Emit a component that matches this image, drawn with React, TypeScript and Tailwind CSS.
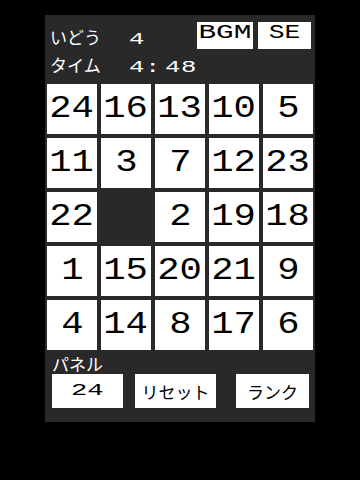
import React from "react";

const tiles = [24, 16, 13, 10, 5, 11, 3, 7, 12, 23, 22, 0, 2, 19, 18, 1, 15, 20, 21, 9, 4, 14, 8, 17, 6];

const mono = "font-['Liberation_Mono','DejaVu_Sans_Mono',monospace]";
const jp = "font-['Noto_Sans_CJK_JP','Noto_Sans',sans-serif]";

function Ch({ c }: { c: string }) {
  return (
    <span className="inline-flex w-[16px] justify-center">
      <span className={`inline-block ${mono} text-[16px] leading-[17px] scale-x-[1.6]`}>{c}</span>
    </span>
  );
}

export default function App() {
  return (
    <div className="w-[360px] h-[480px] bg-black pt-[15px]">
      <div className="ml-[45px] w-[270px] h-[407px] bg-[#292929] flex flex-col">
        {/* header */}
        <div className="h-[67px] flex">
          <div className="pl-[5px] pt-[13px] flex flex-col gap-[11px] text-white">
            <div className="flex items-baseline h-[17px]">
              <span className={`w-[79px] ${jp} text-[17px] leading-[17px]`}>いどう</span>
              <Ch c="4" />
            </div>
            <div className="flex items-baseline h-[17px]">
              <span className={`w-[79px] ${jp} text-[17px] leading-[17px]`}>タイム</span>
              <Ch c="4" />
              <Ch c=":" />
              <span className="ml-[4px] flex">
                <Ch c="4" />
                <Ch c="8" />
              </span>
            </div>
          </div>
          <div className="ml-auto flex gap-[5px] pr-[4px] pt-[7px]">
            <div className="w-[56px] h-[27px] bg-white flex justify-center items-start pt-[1px]">
              <span className={`inline-block ${mono} text-[21px] leading-[20px] text-black scale-x-[1.4]`}>BGM</span>
            </div>
            <div className="w-[53px] h-[27px] bg-white flex justify-center items-start pt-[1px]">
              <span className={`inline-block ${mono} text-[21px] leading-[20px] text-black scale-x-[1.25]`}>SE</span>
            </div>
          </div>
        </div>
        {/* grid */}
        <div className="grid grid-cols-5 w-[270px]">
          {tiles.map((n, i) => (
            <div key={i} className="h-[54px] p-[2px]">
              {n === 0 ? (
                <div className="h-full w-full" />
              ) : (
                <div className="h-full w-full bg-white flex items-center justify-center">
                  <span className={`inline-block ${mono} text-[31px] leading-[30px] text-black scale-x-[1.2]`}>{n}</span>
                </div>
              )}
            </div>
          ))}
        </div>
        {/* bottom */}
        <div className={`mt-[3px] pl-[7px] ${jp} text-[17px] leading-[17px] text-white`}>パネル</div>
        <div className="mt-[2px] pl-[7px] flex">
          <div className="w-[71px] h-[34px] bg-white flex items-center justify-center">
            <span className={`inline-block ${mono} text-[17px] leading-[16px] text-black scale-x-[1.6]`}>24</span>
          </div>
          <div className={`ml-[12px] w-[81px] h-[34px] bg-white flex items-center justify-center ${jp} text-[17px] leading-[17px] text-black`}>
            リセット
          </div>
          <div className={`ml-[20px] w-[73px] h-[34px] bg-white flex items-center justify-center ${jp} text-[17px] leading-[17px] text-black`}>
            ランク
          </div>
        </div>
      </div>
    </div>
  );
}
